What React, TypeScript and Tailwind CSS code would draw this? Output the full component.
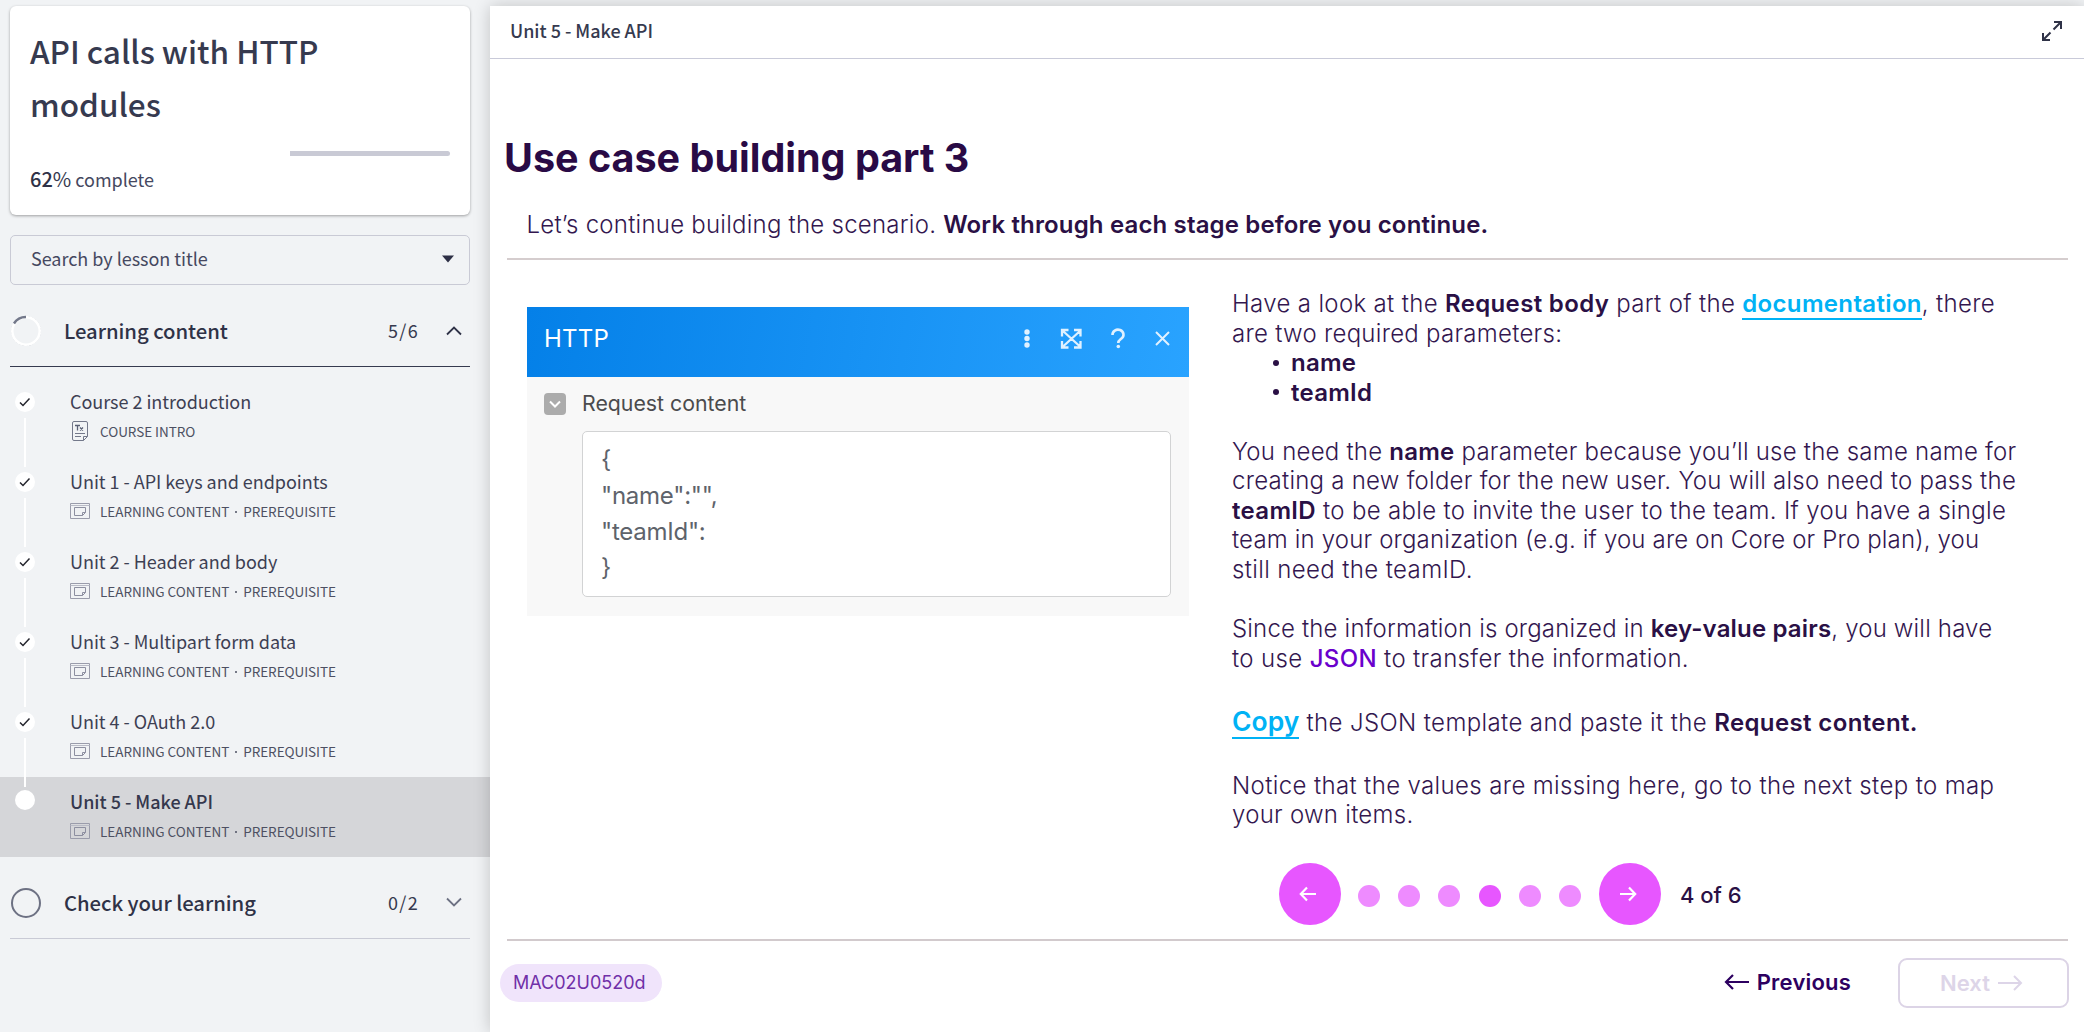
import type { ReactNode } from 'react';

const lessons = [
  { title: 'Course 2 introduction', intro: true, active: false },
  { title: 'Unit 1 - API keys and endpoints', intro: false, active: false },
  { title: 'Unit 2 - Header and body', intro: false, active: false },
  { title: 'Unit 3 - Multipart form data', intro: false, active: false },
  { title: 'Unit 4 - OAuth 2.0', intro: false, active: false },
  { title: 'Unit 5 - Make API', intro: false, active: true },
];

function IntroIcon() {
  return (
    <svg width="20" height="20" viewBox="0 0 20 20" fill="none" stroke="#73788a" strokeWidth="1">
      <path d="M13.5 19.5H4a1.5 1.5 0 0 1-1.5-1.5V2A1.5 1.5 0 0 1 4 .5h12A1.5 1.5 0 0 1 17.5 2v13.5zM13.5 19.5v-4h4" />
      <path d="M5 4.5h5M7.500 4.500v5M10 6.500l3 3M13 6.500l-3 3" stroke="#5a6075" strokeWidth="1.3" />
      <path d="M5 12.500h10M5 15.500h6" />
    </svg>
  );
}

function ContentIcon() {
  return (
    <svg width="20" height="20" viewBox="0 0 20 20" fill="none" stroke="#9a9cab" strokeWidth="1">
      <path d="M.5 2.500h19v15H.5z" />
      <path d="M.5 4.500h19" stroke="#b9bbc6" />
      <path d="M12.500 14.500h-8v-8h11v5zM12.500 14.500v-3h3" stroke="#8d8fa0" />
    </svg>
  );
}

function Lesson({ title, intro, active, last }: { title: string; intro: boolean; active: boolean; last: boolean }) {
  return (
    <li className={`relative flex h-20 pl-[15px] ${active ? 'bg-[#d5d6d9]' : ''}`}>
      {active ? (
        <span className="mt-[13px] size-5 shrink-0 rounded-full bg-white" />
      ) : (
        <span className="mt-[15px] flex size-5 shrink-0 items-center justify-center rounded-full bg-white">
          <svg width="12" height="10" viewBox="0 0 12 10" fill="none" stroke="#25262e" strokeWidth="1.5">
            <path d="M1 5.500l3 3L10.500 1.500" />
          </svg>
        </span>
      )}
      {!last && <span className="absolute left-6 top-[41px] z-10 h-[49px] w-0.5 bg-white" />}
      <div className="ml-[35px] pt-3">
        <div
          className={`h-6 whitespace-nowrap text-[18px] leading-6 tracking-[-0.03px] ${active ? 'font-medium text-[#35384d]' : 'text-[#3d4053]'}`}
        >
          {title}
        </div>
        <div className="mt-2 flex h-5 items-center text-[13.5px] leading-5 text-[#4d5062]">
          {intro ? <IntroIcon /> : <ContentIcon />}
          <span className="ml-2.5 whitespace-nowrap tracking-[-0.03px]">{intro ? 'COURSE INTRO' : 'LEARNING CONTENT'}</span>
          {!intro && (
            <>
              <span className="mx-1.5 mt-0.5 size-0.5 rounded-full bg-[#4d5062]" />
              <span className="tracking-[-0.06px]">PREREQUISITE</span>
            </>
          )}
        </div>
      </div>
    </li>
  );
}

function Sidebar() {
  return (
    <aside className="w-[490px] shrink-0 pt-1.5 font-['Noto_Sans_CJK_SC',sans-serif] text-[#363a4f]">
      <div className="ml-2.5 h-[209px] w-[460px] rounded-md bg-white px-5 pt-[18px] shadow-[0_1px_3px_rgba(0,0,0,0.35)]">
        <h1 className="text-[31.5px] font-medium leading-[53px]">
          API calls with HTTP
          <br />
          modules
        </h1>
        <div className="mt-[21px] flex h-[5px] justify-end">
          <div className="w-40 rounded-r-full bg-[#c9cad5]" />
        </div>
        <div className="mt-[11px] flex h-6 items-center text-[18px] leading-6 text-[#454860]">
          <span className="text-[20px] font-medium text-[#2f3247]">62</span>
          <span className="text-[20px] text-[#363a4f]">%</span>
          <span className="ml-1">complete</span>
        </div>
      </div>
      <div className="ml-2.5 mt-5 flex h-[50px] w-[460px] items-center justify-between rounded-[5px] border border-[#c9cad5] pl-5 pr-[15px]">
        <span className="-mt-1 text-[18px] leading-6 tracking-[-0.03px] text-[#454860]">Search by lesson title</span>
        <svg width="12" height="8" viewBox="0 0 12 8" fill="#2d2f45" className="-mt-0.5">
          <path d="M0 .5h12L6 7.500z" />
        </svg>
      </div>
      <div className="ml-2.5 mt-2.5 flex h-[72px] w-[460px] items-center border-b border-[#363a4f]">
        <svg width="32" height="32" viewBox="0 0 32 32" fill="none">
          <circle cx="16" cy="16" r="14.500" stroke="#cfd1d8" strokeWidth="1" strokeDasharray="2 1.500" />
          <circle cx="16" cy="16" r="13.700" stroke="#fff" strokeWidth="2.500" />
          <path d="M4 8.500A14 14 0 0 1 16 2" stroke="#73788a" strokeWidth="2.400" />
        </svg>
        <span className="-mt-0.5 ml-[22px] text-[20.3px] font-medium leading-7 tracking-[-0.05px] text-[#2f3247]">Learning content</span>
        <span className="-mt-0.5 ml-auto text-[18px] leading-6 tracking-[1.3px]">5/6</span>
        <svg width="18" height="12" viewBox="0 0 18 12" fill="none" stroke="#2f3247" strokeWidth="1.800" className="ml-[26px] mr-[7px]">
          <path d="M2 9.500l7-7 7 7" />
        </svg>
      </div>
      <ul className="mt-2.5">
        {lessons.map((l, i) => (
          <Lesson key={l.title} {...l} last={i === lessons.length - 1} />
        ))}
      </ul>
      <div className="ml-2.5 mt-[9px] flex h-[73px] w-[460px] items-center border-b border-[#c9cad5]">
        <svg width="32" height="32" viewBox="0 0 32 32" fill="none" className="mt-[1px]">
          <circle cx="16" cy="16" r="14" stroke="#6d7183" strokeWidth="2" />
        </svg>
        <span className="ml-[22px] text-[20.3px] font-medium leading-7 tracking-[-0.05px] text-[#2f3247]">Check your learning</span>
        <span className="ml-auto text-[18px] leading-6 tracking-[1.3px]">0/2</span>
        <svg width="18" height="12" viewBox="0 0 18 12" fill="none" stroke="#6d7183" strokeWidth="1.800" className="ml-[26px] mr-[7px]">
          <path d="M2 2.500l7 7 7-7" />
        </svg>
      </div>
    </aside>
  );
}

function B({ children }: { children: ReactNode }) {
  return <b className="font-[580] text-[#2a1045]">{children}</b>;
}

function HttpPanel() {
  return (
    <div className="mt-[47px] h-[309px] w-[662px] bg-[#f8f8f8]">
      <div className="flex h-[70px] items-center bg-linear-[100deg,#0480e8,#29a3ff] pb-1.5 pl-[17px] text-white">
        <span className="text-[24px] tracking-[0.2px]">HTTP</span>
        <svg width="160" height="24" viewBox="0 0 160 24" className="ml-auto mr-2.5" fill="none" stroke="#e0f1ff" strokeWidth="2">
          <g fill="#e0f1ff" stroke="none">
            <circle cx="8" cy="5" r="2.700" />
            <circle cx="8" cy="11.500" r="2.700" />
            <circle cx="8" cy="18" r="2.700" />
          </g>
          <path d="M43 9.500V3h6.500M55 3h6.500V9.500M61.500 14V20.500H55M49.500 20.500H43v-6.500M44 4l17 15.500M61 4L44 19.500" strokeWidth="2.300" />
          <path d="M93.500 8a5.500 5 0 1 1 9 3.500c-1.800 1.500-3.200 2-3.200 4.500" strokeWidth="2.600" />
          <circle cx="99.300" cy="19.500" r="1.800" fill="#e0f1ff" stroke="none" />
          <path d="M137 5l13 13M150 5l-13 13" />
        </svg>
      </div>
      <div className="flex items-center pl-[17px] pt-[13px]">
        <span className="mr-4 flex size-[22px] items-center justify-center rounded-[4px] bg-[#acacac]">
          <svg width="12" height="8" viewBox="0 0 12 8" fill="none" stroke="#fff" strokeWidth="2">
            <path d="M1 1.500l5 5 5-5" />
          </svg>
        </span>
        <span className="text-[21.3px] leading-[27px] text-[#4b4b4d]">Request content</span>
      </div>
      <div className="ml-[55px] mt-3.5 h-[166px] w-[589px] whitespace-pre rounded-[5px] border border-[#d2d3d4] bg-white pl-[18px] pt-2.5 text-[24px] leading-9 tracking-[-0.25px] text-[#5e636b]">
        {'{\n"name":"",\n"teamId":\n}'}
      </div>
    </div>
  );
}

function Arrow({ flip }: { flip?: boolean }) {
  return (
    <svg width="18" height="16" viewBox="0 0 18 16" fill="none" stroke="#fff" strokeWidth="2.200" className={flip ? 'mr-1 rotate-180' : 'mr-1'}>
      <path d="M17 8H2M8 1.500L1.800 8 8 14.500" />
    </svg>
  );
}

function Pager() {
  return (
    <div className="ml-[47px] mt-[33px] flex h-[62px] items-center">
      <button className="flex size-[62px] items-center justify-center rounded-full bg-[#e756ff]">
        <Arrow />
      </button>
      <div className="ml-[17px] mt-1 flex w-[223px] justify-between">
        {[1, 2, 3, 4, 5, 6].map((n) => (
          <span key={n} className={`size-[22px] rounded-full ${n === 4 ? 'bg-[#e756ff]' : 'bg-[#ee8bff]'}`} />
        ))}
      </div>
      <button className="ml-[18px] flex size-[62px] items-center justify-center rounded-full bg-[#e756ff]">
        <Arrow flip />
      </button>
      <span className="ml-[19px] mt-0.5 text-[22px] font-medium text-[#2a1045]">4 of 6</span>
    </div>
  );
}

function Copy() {
  return (
    <div className="h-[541px] w-[820px] whitespace-nowrap text-[24px] font-light leading-[29.55px] text-[#33174f]">
      <p>
        <span className="tracking-[0.34px]">
          Have a look at the <B>Request body</B> part of the{' '}
          <a className="border-b-2 border-[#00b2f5] font-[580] text-[#00b2f5]">documentation</a>, there
        </span>
        <br />
        <span className="tracking-[0.27px]">are two required parameters:</span>
      </p>
      <ul className="pl-[38px] tracking-[0.25px]">
        {['name', 'teamId'].map((t) => (
          <li key={t} className="flex items-center">
            <span className="ml-[3px] mr-3 size-1.5 rounded-full bg-[#2a1045]" />
            <B>{t}</B>
          </li>
        ))}
      </ul>
      <p className="mt-[29.55px]">
        <span className="tracking-[0.23px]">
          You need the <B>name</B> parameter because you’ll use the same name for
        </span>
        <br />
        <span className="tracking-[0.25px]">creating a new folder for the new user. You will also need to pass the</span>
        <br />
        <span className="tracking-[0.32px]">
          <B>teamID</B> to be able to invite the user to the team. If you have a single
        </span>
        <br />
        <span className="tracking-[0.16px]">team in your organization (e.g. if you are on Core or Pro plan), you</span>
        <br />
        <span className="tracking-[0.37px]">still need the teamID.</span>
      </p>
      <p className="mt-[29.55px]">
        <span className="tracking-[0.17px]">
          Since the information is organized in <B>key-value pairs</B>, you will have
        </span>
        <br />
        <span className="tracking-[0.36px]">
          to use <b className="font-medium text-[#6a00cc]">JSON</b> to transfer the information.
        </span>
      </p>
      <p className="mt-[33.600px] h-[30.500px] tracking-[0.38px]">
        <a className="border-b-2 border-[#00b2f5] text-[26.5px] font-[580] tracking-[0] text-[#00b2f5]">Copy</a>{' '}
        the JSON template and paste it the <B>Request content.</B>
      </p>
      <p className="mt-[33.500px]">
        <span className="tracking-[0.37px]">Notice that the values are missing here, go to the next step to map</span>
        <br />
        <span className="tracking-[0.27px]">your own items.</span>
      </p>
    </div>
  );
}

export default function App() {
  return (
    <div className="flex h-[1032px] w-[2084px] overflow-hidden bg-[#f1f3f5]">
      <Sidebar />
      <main className="relative z-20 mt-1.5 flex min-w-0 flex-1 flex-col bg-white font-[Inter,sans-serif] shadow-[0_0_16px_rgba(0,0,0,0.2)]">
        <header className="flex h-[53px] items-center justify-between border-b border-[#c9cad9] pl-5 pr-5 font-['Noto_Sans_CJK_SC',sans-serif]">
          <span className="-mt-1 text-[18px] font-medium leading-6 tracking-[-0.03px] text-[#363a4f]">Unit 5 - Make API</span>
          <svg width="24" height="24" viewBox="0 0 24 24" fill="none" stroke="#2f3247" strokeWidth="2" className="-mt-0.5">
            <path d="M14 3h7v7M21 3l-7.500 7.500M10 21H3v-7M3 21l7.500-7.500" />
          </svg>
        </header>
        <h2 className="ml-[14px] mt-[75px] text-[39.5px] font-bold leading-[48px] text-[#290a45]">Use case building part 3</h2>
        <div className="ml-[17px] w-[1561px] border-b-2 border-[#d5cdce] pb-[17px] pl-[19.500px] pt-[27px]">
          <p className="whitespace-nowrap text-[24px] font-light leading-8 tracking-[0.24px] text-[#33174f]">
            Let’s continue building the scenario.{' '}
            <b className="font-[580] tracking-[0.15px] text-[#2a1045]">Work through each stage before you continue.</b>
          </p>
        </div>
        <div className="ml-[17px] flex h-[681px] w-[1561px] border-b-2 border-[#d2cacd] pl-5">
          <HttpPanel />
          <div className="ml-[43px] pt-[29px]">
            <Copy />
            <Pager />
          </div>
        </div>
        <footer className="ml-2.5 flex w-[1569px] items-center pt-[17px]">
          <span className="-mt-[1px] flex h-[38px] w-[162px] items-center rounded-full bg-[#f0e4fb] pl-[13px] text-[18px] text-[#7030a8]">
            MAC02U0520d
          </span>
          <button className="-mt-0.5 ml-auto flex items-center text-[22px] font-semibold tracking-[0.2px] text-[#2d0060]">
            <svg width="25" height="18" viewBox="0 0 25 18" fill="none" stroke="#2d0060" strokeWidth="2.200" className="mr-2">
              <path d="M25 9H2M9 2L2 9l7 7" />
            </svg>
            Previous
          </button>
          <button className="ml-[47px] flex h-[50px] w-[171px] items-center justify-center rounded-[9px] border-2 border-[#dcd4e6] pr-1 text-[22px] font-semibold text-[#ddd5e8]">
            Next
            <svg width="25" height="18" viewBox="0 0 25 18" fill="none" stroke="#ddd5e8" strokeWidth="2" className="ml-2">
              <path d="M0 9h23M16 2l7 7-7 7" />
            </svg>
          </button>
        </footer>
      </main>
    </div>
  );
}
